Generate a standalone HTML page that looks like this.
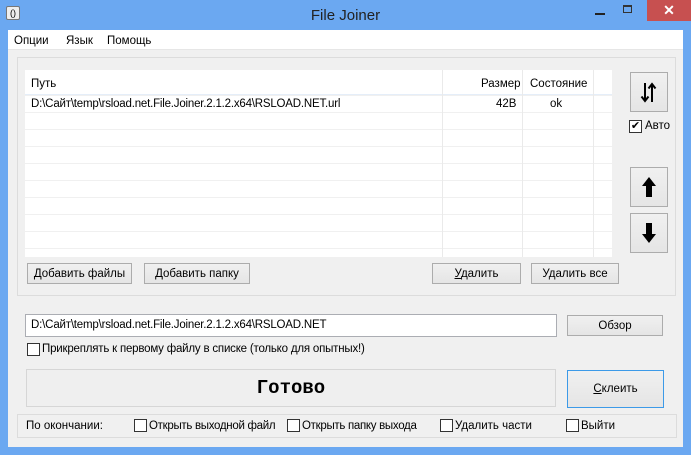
<!DOCTYPE html>
<html><head><meta charset="utf-8"><style>
*{box-sizing:border-box;margin:0;padding:0}
body{width:691px;height:455px;background:#6ba8f1;font-family:"Liberation Sans","Noto Sans CJK SC",sans-serif;font-size:11.5px;color:#000;position:relative;overflow:hidden}
.a{position:absolute}
.client{left:8px;top:30px;width:675px;height:417px;background:#f0f0f0}
.btn{position:absolute;background:linear-gradient(#f0f0f0,#e5e5e5);border:1px solid #acacac;text-align:center;font-size:11.5px;padding-top:1px}
.cb{position:absolute;width:13px;height:13px;border:1px solid #333;background:#fff}
.t{position:absolute;white-space:nowrap;margin-top:1px}
</style></head><body>
<div class="a" style="left:6px;top:6px;width:14px;height:14px;background:#eee;border:1px solid #777;border-radius:2px;font-size:9px;text-align:center;line-height:12px">()</div>
<div class="t" style="left:0;width:691px;top:6px;text-align:center;font-size:15px;color:#222">File Joiner</div>
<div class="a" style="left:595px;top:13px;width:10px;height:2px;background:#222"></div>
<div class="a" style="left:623px;top:5px;width:9px;height:8px;border:1px solid #333;border-top-width:2px"></div>
<div class="a" style="left:647px;top:0;width:44px;height:21px;background:#c75050;color:#fff;text-align:center;font-size:14px;line-height:21px;font-weight:bold">✕</div>
<div class="a client"></div>
<div class="a" style="left:8px;top:30px;width:675px;height:20px;background:#fff;border-bottom:1px solid #e6e6e6"></div>
<div class="t" style="left:14px;top:34px">Опции</div>
<div class="t" style="left:66px;top:34px">Язык</div>
<div class="t" style="left:107px;top:34px">Помощь</div>
<div class="a" style="left:17px;top:57px;width:659px;height:239px;border:1px solid #dcdcdc"></div>
<div class="a" style="left:25px;top:70px;width:587px;height:187px;background:#fff;
background-image:linear-gradient(#f0f0f0 1px,transparent 1px);background-size:100% 17px;background-position:0 8px"></div>
<div class="a" style="left:25px;top:70px;width:587px;height:25px;background:#fff;border-bottom:1px solid #e5eef9"></div>
<div class="a" style="left:442px;top:70px;width:1px;height:187px;background:#eaeaea"></div>
<div class="a" style="left:522px;top:70px;width:1px;height:187px;background:#eaeaea"></div>
<div class="a" style="left:593px;top:70px;width:1px;height:187px;background:#eaeaea"></div>
<div class="t" style="left:31px;top:77px">Путь</div>
<div class="t" style="left:481px;top:77px">Размер</div>
<div class="t" style="left:530px;top:77px">Состояние</div>
<div class="t" style="left:31px;top:97px;letter-spacing:-0.2px">D:\Сайт\temp\rsload.net.File.Joiner.2.1.2.x64\RSLOAD.NET.url</div>
<div class="t" style="left:496px;top:97px">42B</div>
<div class="t" style="left:550px;top:97px">ok</div>
<div class="btn" style="left:630px;top:72px;width:38px;height:40px;padding:0"><svg width="36" height="38"><path d="M14 10 V27 M10.5 23.5 L14 28 L17.5 23.5 M21 29 V12 M17.5 15.5 L21 11 L24.5 15.5" stroke="#000" stroke-width="2" fill="none"/></svg></div>
<div class="cb" style="left:629px;top:120px;font-size:11px;line-height:11px;text-align:center">✔</div>
<div class="t" style="left:645px;top:119px">Авто</div>
<div class="btn" style="left:630px;top:167px;width:38px;height:40px;padding:0"><svg width="36" height="38"><path d="M18 9 L25 18 L21 18 L21 29 L15 29 L15 18 L11 18Z" fill="#000"/></svg></div>
<div class="btn" style="left:630px;top:213px;width:38px;height:40px;padding:0"><svg width="36" height="38"><path d="M18 29 L25 20 L21 20 L21 9 L15 9 L15 20 L11 20Z" fill="#000"/></svg></div>
<div class="btn" style="left:27px;top:263px;width:105px;height:21px;line-height:19px">Добавить файлы</div>
<div class="btn" style="left:144px;top:263px;width:106px;height:21px;line-height:19px">Добавить папку</div>
<div class="btn" style="left:432px;top:263px;width:89px;height:21px;line-height:19px"><u>У</u>далить</div>
<div class="btn" style="left:531px;top:263px;width:88px;height:21px;line-height:19px">Удалить все</div>
<div class="a" style="left:25px;top:314px;width:532px;height:23px;background:#fff;border:1px solid #abadb3"></div>
<div class="t" style="left:31px;top:318px;letter-spacing:-0.2px">D:\Сайт\temp\rsload.net.File.Joiner.2.1.2.x64\RSLOAD.NET</div>
<div class="btn" style="left:567px;top:315px;width:96px;height:21px;line-height:19px">Обзор</div>
<div class="cb" style="left:27px;top:343px"></div>
<div class="t" style="left:42px;top:342px;letter-spacing:-0.2px">Прикреплять к первому файлу в списке (только для опытных!)</div>
<div class="a" style="left:26px;top:369px;width:530px;height:38px;background:#efefef;border:1px solid #d6d6d6;text-align:center;font-family:'Liberation Mono',monospace;font-weight:bold;font-size:19px;line-height:36px">Готово</div>
<div class="btn" style="left:567px;top:370px;width:97px;height:38px;line-height:36px;border-color:#3c9ae8;padding:0"><u>С</u>клеить</div>
<div class="a" style="left:17px;top:414px;width:660px;height:24px;border:1px solid #dcdcdc"></div>
<div class="t" style="left:26px;top:419px">По окончании:</div>
<div class="cb" style="left:134px;top:419px"></div><div class="t" style="left:149px;top:419px;letter-spacing:-0.3px">Открыть выходной файл</div>
<div class="cb" style="left:287px;top:419px"></div><div class="t" style="left:302px;top:419px;letter-spacing:-0.3px">Открыть папку выхода</div>
<div class="cb" style="left:440px;top:419px"></div><div class="t" style="left:455px;top:419px">Удалить части</div>
<div class="cb" style="left:566px;top:419px"></div><div class="t" style="left:581px;top:419px">Выйти</div>
</body></html>
